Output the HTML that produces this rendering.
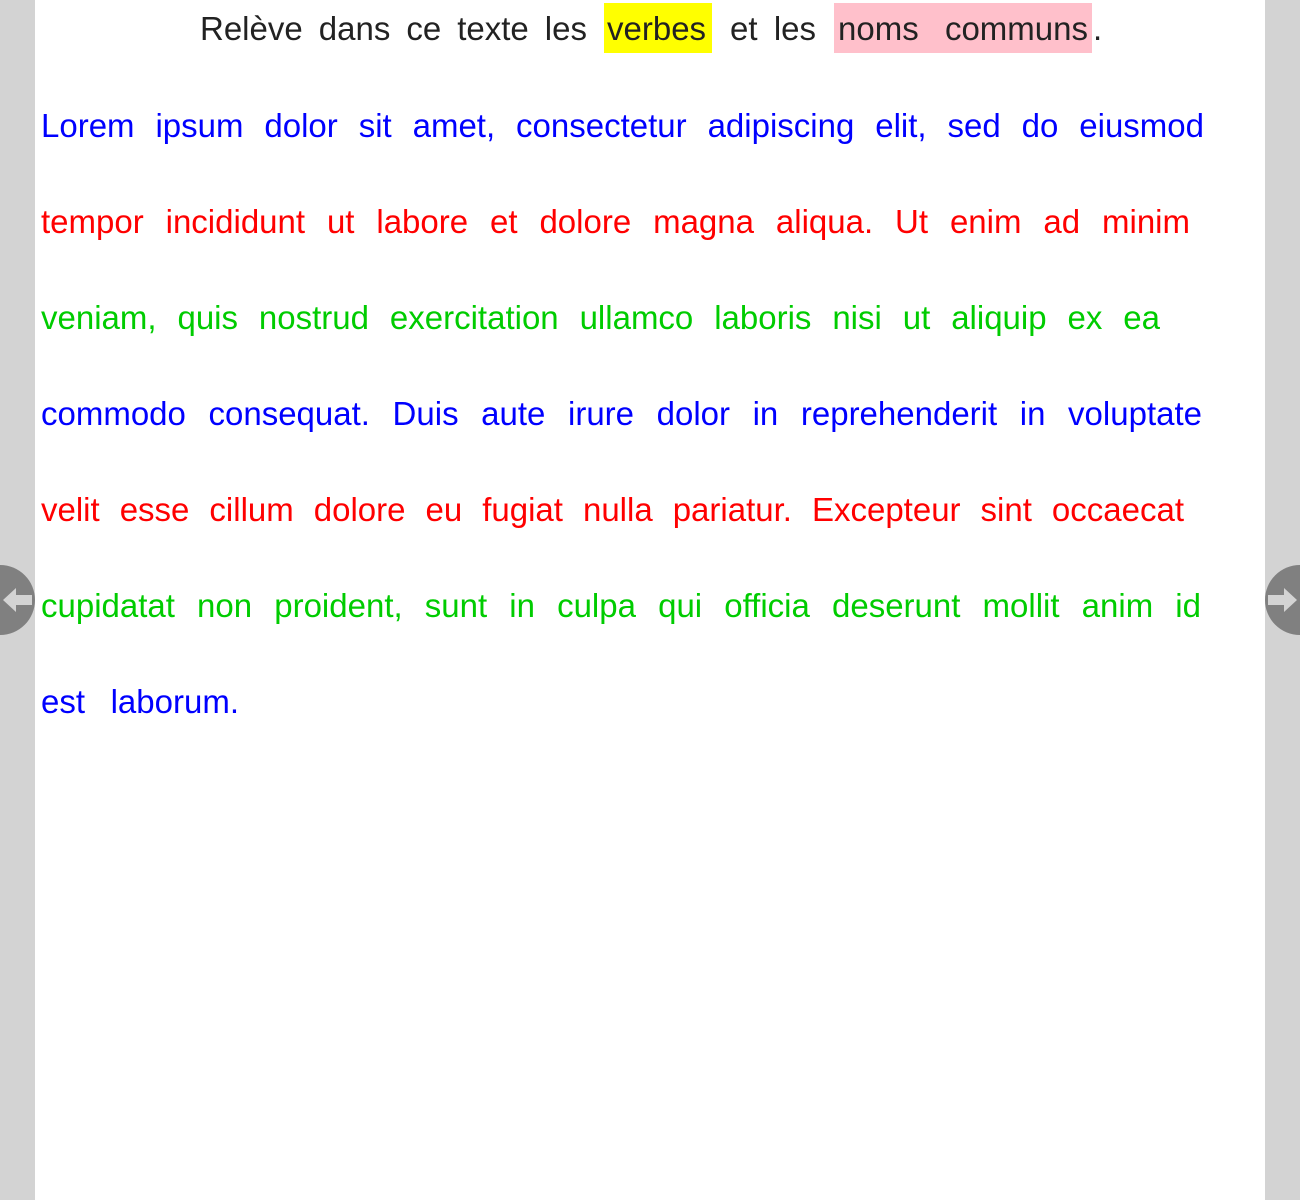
<!DOCTYPE html>
<html><head><meta charset="utf-8"><style>
body{margin:0;width:1300px;height:1200px;background:#fff;position:relative;overflow:hidden;font-family:"Liberation Sans",sans-serif;font-size:33px}
.sb{position:absolute;top:0;width:35px;height:1200px;background:#d3d3d3}
.l{position:absolute;left:41px;height:48px;line-height:48px;white-space:nowrap;text-align:justify;text-align-last:justify}
.h{position:absolute;top:5px;height:48px;line-height:48px;color:#222;white-space:nowrap}
.b{color:#0000ff}.r{color:#ff0000}.g{color:#00cc00}
.circ{position:absolute;top:565px;width:70px;height:70px;border-radius:50%;background:#808080}
</style></head><body>
<div class="sb" style="left:0"></div>
<div class="sb" style="left:1265px"></div>
<div style="position:absolute;left:604px;top:3px;width:108px;height:50px;background:#ffff00"></div>
<div style="position:absolute;left:834px;top:3px;width:258px;height:50px;background:#ffc0cb"></div>
<div class="h" style="left:200px;width:387px;text-align:justify;text-align-last:justify">Relève dans ce texte les</div>
<div class="h" style="left:607px;width:102px;text-align:justify;text-align-last:justify">verbes</div>
<div class="h" style="left:730px;width:86px;text-align:justify;text-align-last:justify">et les</div>
<div class="h" style="left:838px;width:250px;text-align:justify;text-align-last:justify">noms communs</div>
<div class="h" style="left:1093px">.</div>
<div class="l b" style="top:102px;width:1163px">Lorem ipsum dolor sit amet, consectetur adipiscing elit, sed do eiusmod</div>
<div class="l r" style="top:198px;width:1149px">tempor incididunt ut labore et dolore magna aliqua. Ut enim ad minim</div>
<div class="l g" style="top:294px;width:1119px">veniam, quis nostrud exercitation ullamco laboris nisi ut aliquip ex ea</div>
<div class="l b" style="top:390px;width:1161px">commodo consequat. Duis aute irure dolor in reprehenderit in voluptate</div>
<div class="l r" style="top:486px;width:1143px">velit esse cillum dolore eu fugiat nulla pariatur. Excepteur sint occaecat</div>
<div class="l g" style="top:582px;width:1160px">cupidatat non proident, sunt in culpa qui officia deserunt mollit anim id</div>
<div class="l b" style="top:678px;width:198px">est laborum.</div>
<div class="circ" style="left:-35px"></div>
<div class="circ" style="left:1265px"></div>
<svg style="position:absolute;left:0;top:580px" width="35" height="40"><polygon points="3,20 16,8 16,15 32,15 32,25 16,25 16,32" fill="#d3d3d3"/></svg>
<svg style="position:absolute;left:1265px;top:580px" width="35" height="40"><polygon points="32,20 19,8 19,15 3,15 3,25 19,25 19,32" fill="#d3d3d3"/></svg>
</body></html>
